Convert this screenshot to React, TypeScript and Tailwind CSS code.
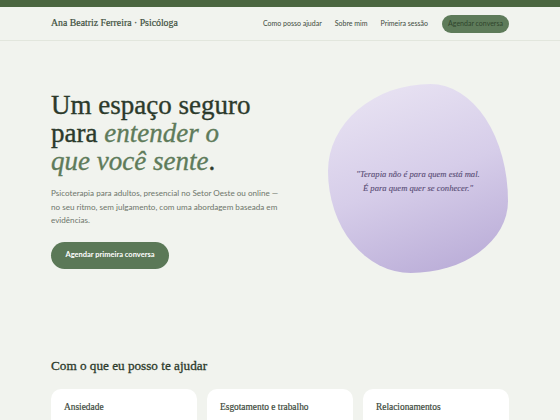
import React from "react";

const serif = "font-['Liberation_Serif','DejaVu_Serif',serif]";
const sans = "font-['Lato','Noto_Sans',sans-serif]";

export default function App() {
  return (
    <div className={`min-h-[420px] w-full bg-[#f1f3ee] text-[#2c3a2b] ${sans}`}>
      <div className="h-[7px] bg-[#4b6640]" />
      <header className="border-b border-[#e2e6dd]">
        <div className="mx-[51px] flex h-[33px] items-center justify-between">
          <span className={`${serif} text-[9.8px] text-[#3d4f3c] [-webkit-text-stroke:0.2px_currentColor]`}>
            Ana Beatriz Ferreira · Psicóloga
          </span>
          <nav className="flex items-center gap-[13px] text-[7px] text-[#3d4a3c]">
            <span>Como posso ajudar</span>
            <span>Sobre mim</span>
            <span>Primeira sessão</span>
            <span className="ml-[1px] flex h-[18px] w-[67px] items-center justify-center rounded-full bg-[#5e7b5a] text-[#2e452c]">
              Agendar conversa
            </span>
          </nav>
        </div>
      </header>

      <section className="mx-[51px] mt-[50px] flex items-start justify-between">
        <div className="w-[250px]">
          <h1 className={`${serif} text-[27px] leading-[28px] text-[#2c3a2b] [-webkit-text-stroke:0.35px_currentColor]`}>
            Um espaço seguro
            <br />
            para <em className="text-[#5e7b5a]">entender o</em>
            <br />
            <em className="text-[#5e7b5a]">que você sente</em>.
          </h1>
          <p className="mt-[12px] w-[234px] text-[8.1px] leading-[13.5px] text-[#6e766b]">
            Psicoterapia para adultos, presencial no Setor Oeste ou online — no seu ritmo, sem julgamento, com uma
            abordagem baseada em evidências.
          </p>
          <button className="mt-[14px] flex h-[27px] w-[118px] items-center justify-center rounded-full bg-[#5b7857] text-[7.5px] font-bold text-white">
            Agendar primeira conversa
          </button>
        </div>
        {/* organic blob holding the quote */}
        <div className="mr-[1px] -mt-[7px] flex h-[189px] w-[180px] items-center justify-center rounded-[57%_43%_54%_46%/46%_62%_38%_54%] bg-[linear-gradient(160deg,#ebe6f4_0%,#d6cde9_50%,#b6a8d5_100%)]">
          <p className={`${serif} mt-[4px] text-center text-[8.6px] italic leading-[14px] text-[#574b74] [-webkit-text-stroke:0.1px_currentColor]`}>
            "Terapia não é para quem está mal.
            <br />É para quem quer se conhecer."
          </p>
        </div>
      </section>

      <section className="mx-[51px] mt-[83px]">
        <h2 className={`${serif} text-[13.2px] text-[#2c3a2b] [-webkit-text-stroke:0.3px_currentColor]`}>
          Com o que eu posso te ajudar
        </h2>
        <div className="mt-[13px] grid grid-cols-3 gap-[10px]">
          {[
            ["Ansiedade", "Para quem vive em modo de alerta"],
            ["Esgotamento e trabalho", "Exaustão, cobrança e pressão"],
            ["Relacionamentos", "Padrões que se repetem e vínculos"],
          ].map(([t, d]) => (
            <div key={t} className="h-[60px] rounded-[10px] bg-white px-[13px] pt-[11px]">
              <h3 className={`${serif} text-[9.4px] text-[#3d4a3c] [-webkit-text-stroke:0.2px_currentColor]`}>{t}</h3>
              <p className="mt-[5px] text-[7.5px] text-[#7a8478]">{d}</p>
            </div>
          ))}
        </div>
      </section>
    </div>
  );
}
